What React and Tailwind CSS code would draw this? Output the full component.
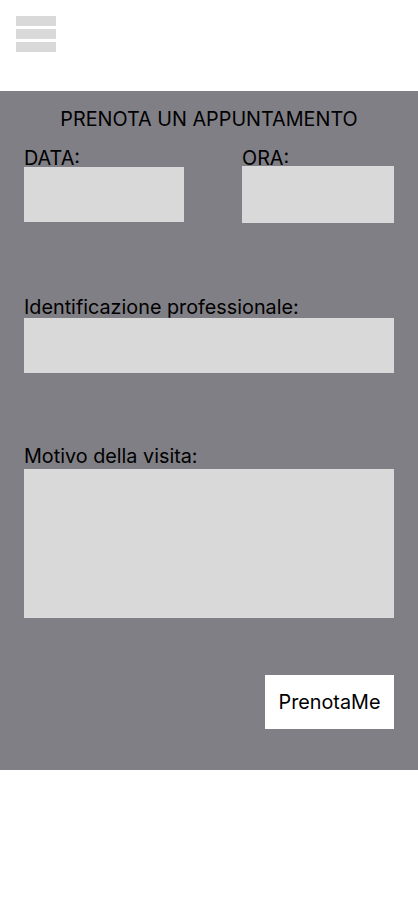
export default function App() {
  return (
    <div className="w-[418px] min-h-[917px] bg-white font-['Inter',sans-serif] text-black">
      <div className="h-[91px] pt-4 pl-4">
        <div className="flex flex-col gap-[3px] w-10">
          <div className="h-[10px] bg-[#d9d9d9]" />
          <div className="h-[10px] bg-[#d9d9d9]" />
          <div className="h-[10px] bg-[#d9d9d9]" />
        </div>
      </div>
      <div className="bg-[#807f85] px-6 pt-4 pb-[41px] flex flex-col">
        <h1 className="text-center text-[19.8px] leading-6 font-normal">PRENOTA UN APPUNTAMENTO</h1>
        <div className="flex mt-[19px]">
          <div className="w-[160px] flex flex-col">
            <span className="text-[19.8px] leading-[17px]">DATA:</span>
            <div className="h-[55px] bg-[#d9d9d9]" />
          </div>
          <div className="ml-auto w-[152px] flex flex-col">
            <span className="text-[19.8px] leading-[16px]">ORA:</span>
            <div className="h-[57px] bg-[#d9d9d9]" />
          </div>
        </div>
        <span className="text-[19.8px] leading-[17px] mt-[76px]">Identificazione professionale:</span>
        <div className="h-[55px] bg-[#d9d9d9] mt-[2px]" />
        <span className="text-[19.8px] leading-[17px] mt-[75px]">Motivo della visita:</span>
        <div className="h-[149px] bg-[#d9d9d9] mt-[4px]" />
        <div className="flex justify-end mt-[57px]">
          <button className="w-[129px] h-[54px] bg-white text-[19.8px] leading-6">PrenotaMe</button>
        </div>
      </div>
    </div>
  );
}
